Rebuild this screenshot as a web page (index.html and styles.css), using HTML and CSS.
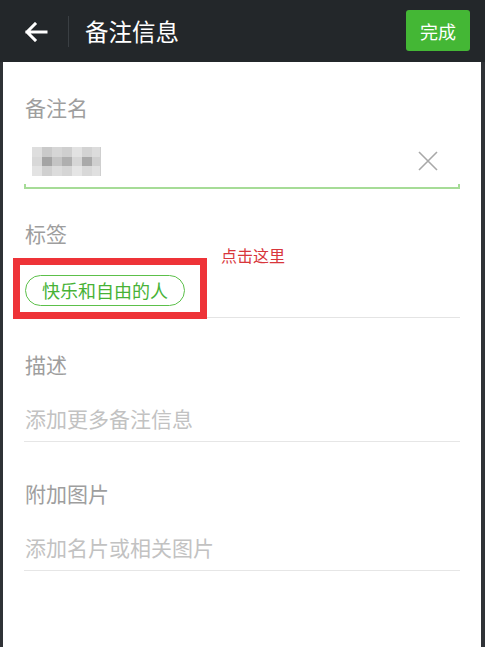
FILE: index.html
```html
<!DOCTYPE html>
<html lang="zh-CN">
<head>
<meta charset="utf-8">
<title>备注信息</title>
<link rel="stylesheet" href="styles.css">
</head>
<body>
<header class="topbar">
  <div class="back">
    <svg width="24" height="20" viewBox="0 0 24 20"><path d="M22 10H3M11 2L3 10l8 8" fill="none" stroke="#fff" stroke-width="3" stroke-linecap="square"/></svg>
  </div>
  <div class="divider"></div>
  <h1 class="title">备注信息</h1>
  <button class="done">完成</button>
</header>
<main class="panel">
  <section class="field">
    <div class="label first">备注名</div>
    <div class="input-row">
      <svg class="mosaic" width="70" height="29" viewBox="0 0 70 29">
        <rect x="0" y="0" width="10" height="10" fill="#dedede"/><rect x="10" y="0" width="10" height="10" fill="#cacaca"/><rect x="20" y="0" width="10" height="10" fill="#d6d6d6"/><rect x="30" y="0" width="10" height="10" fill="#cfcfcf"/><rect x="40" y="0" width="10" height="10" fill="#e2e2e2"/><rect x="50" y="0" width="10" height="10" fill="#d3d3d3"/><rect x="60" y="0" width="8" height="10" fill="#dcdcdc"/>
        <rect x="0" y="10" width="10" height="9" fill="#d8d8d8"/><rect x="10" y="10" width="10" height="9" fill="#a4a4a4"/><rect x="20" y="10" width="10" height="9" fill="#c4c4c4"/><rect x="30" y="10" width="10" height="9" fill="#afafaf"/><rect x="40" y="10" width="10" height="9" fill="#d6d6d6"/><rect x="50" y="10" width="10" height="9" fill="#a9a9a9"/><rect x="60" y="10" width="8" height="9" fill="#cfcfcf"/>
        <rect x="0" y="19" width="10" height="10" fill="#e3e3e3"/><rect x="10" y="19" width="10" height="10" fill="#d0d0d0"/><rect x="20" y="19" width="10" height="10" fill="#dcdcdc"/><rect x="30" y="19" width="10" height="10" fill="#d5d5d5"/><rect x="40" y="19" width="10" height="10" fill="#e5e5e5"/><rect x="50" y="19" width="10" height="10" fill="#d8d8d8"/><rect x="60" y="19" width="8" height="10" fill="#e0e0e0"/>
        <rect x="68" y="0" width="1" height="29" fill="#cfcfcf"/>
      </svg>
      <svg class="clear" width="20" height="20" viewBox="0 0 20 20"><path d="M1 1L19 19M19 1L1 19" stroke="#a8a8a8" stroke-width="1.6" fill="none"/></svg>
    </div>
    <div class="underline"></div>
  </section>

  <section class="field tags-field">
    <div class="label">标签</div>
    <div class="tags">
      <span class="tag">快乐和自由的人</span>
    </div>
  </section>

  <section class="field">
    <div class="label label-gap">描述</div>
    <div class="placeholder">添加更多备注信息</div>
  </section>

  <section class="field">
    <div class="label label-gap2">附加图片</div>
    <div class="placeholder">添加名片或相关图片</div>
  </section>

  <div class="highlight-box"></div>
  <div class="hint">点击这里</div>
</main>
</body>
</html>
```

FILE: styles.css
```css
* { box-sizing: border-box; }
html, body { margin: 0; padding: 0; }
body {
  width: 485px;
  height: 647px;
  overflow: hidden;
  background: #2f3236;
  font-family: "Noto Sans CJK SC", "Noto Sans", sans-serif;
}
.topbar {
  height: 62px;
  background: #23272a;
  display: flex;
  align-items: center;
  padding-left: 24px;
  padding-right: 15px;
}
.back {
  width: 24px;
  height: 20px;
  display: flex;
  margin-top: 1px;
}
.divider {
  width: 1px;
  height: 31px;
  background: #3a3f43;
  margin-left: 20px;
}
.title {
  margin: 0 0 0 16px;
  font-size: 23.5px;
  font-weight: 400;
  color: #ffffff;
  line-height: 30px;
  flex: 1;
}
.done {
  width: 64px;
  height: 41px;
  border: none;
  border-radius: 3px;
  background: #44b735;
  color: #ffffff;
  font-family: "Noto Sans CJK SC", sans-serif;
  font-size: 18px;
  padding: 0;
  margin-top: -1px;
}
.panel {
  position: relative;
  margin: 0 4px 0 3px;
  height: 585px;
  background: #ffffff;
  padding: 0 21px;
}
.field { display: flex; flex-direction: column; }
.label {
  font-size: 21px;
  line-height: 30px;
  color: #9e9e9e;
  padding-left: 1px;
}
.label.first { margin-top: 30px; }
.input-row {
  height: 62px;
  display: flex;
  align-items: center;
  justify-content: space-between;
  padding-left: 8px;
  padding-right: 22px;
  padding-top: 16px;
}
.mosaic { display: block; }
.clear { display: block; }
.underline {
  height: 5px;
  border: 2px solid #a6dc97;
  border-top: none;
}
.tags-field .label { margin-top: 29px; }
.tags {
  padding-top: 27px;
  padding-bottom: 11px;
  border-bottom: 1px solid #e4e4e4;
  padding-left: 1px;
}
.tag {
  display: inline-block;
  height: 31px;
  line-height: 28px;
  padding: 0 16px;
  border: 1.5px solid #5cc04a;
  border-radius: 16px;
  color: #47b236;
  font-size: 18px;
}
.label-gap { margin-top: 31px; }
.label-gap2 { margin-top: 36px; }
.placeholder {
  margin-top: 24px;
  font-size: 21px;
  line-height: 30px;
  color: #c2c2c2;
  padding-left: 1px;
  padding-bottom: 8px;
  border-bottom: 1px solid #e6e6e6;
}
.highlight-box {
  position: absolute;
  left: 10px;
  top: 196px;
  width: 194px;
  height: 61px;
  border: 7px solid #ee3338;
}
.hint {
  position: absolute;
  left: 218px;
  top: 183px;
  font-size: 16px;
  line-height: 20px;
  color: #d8363b;
}
```
